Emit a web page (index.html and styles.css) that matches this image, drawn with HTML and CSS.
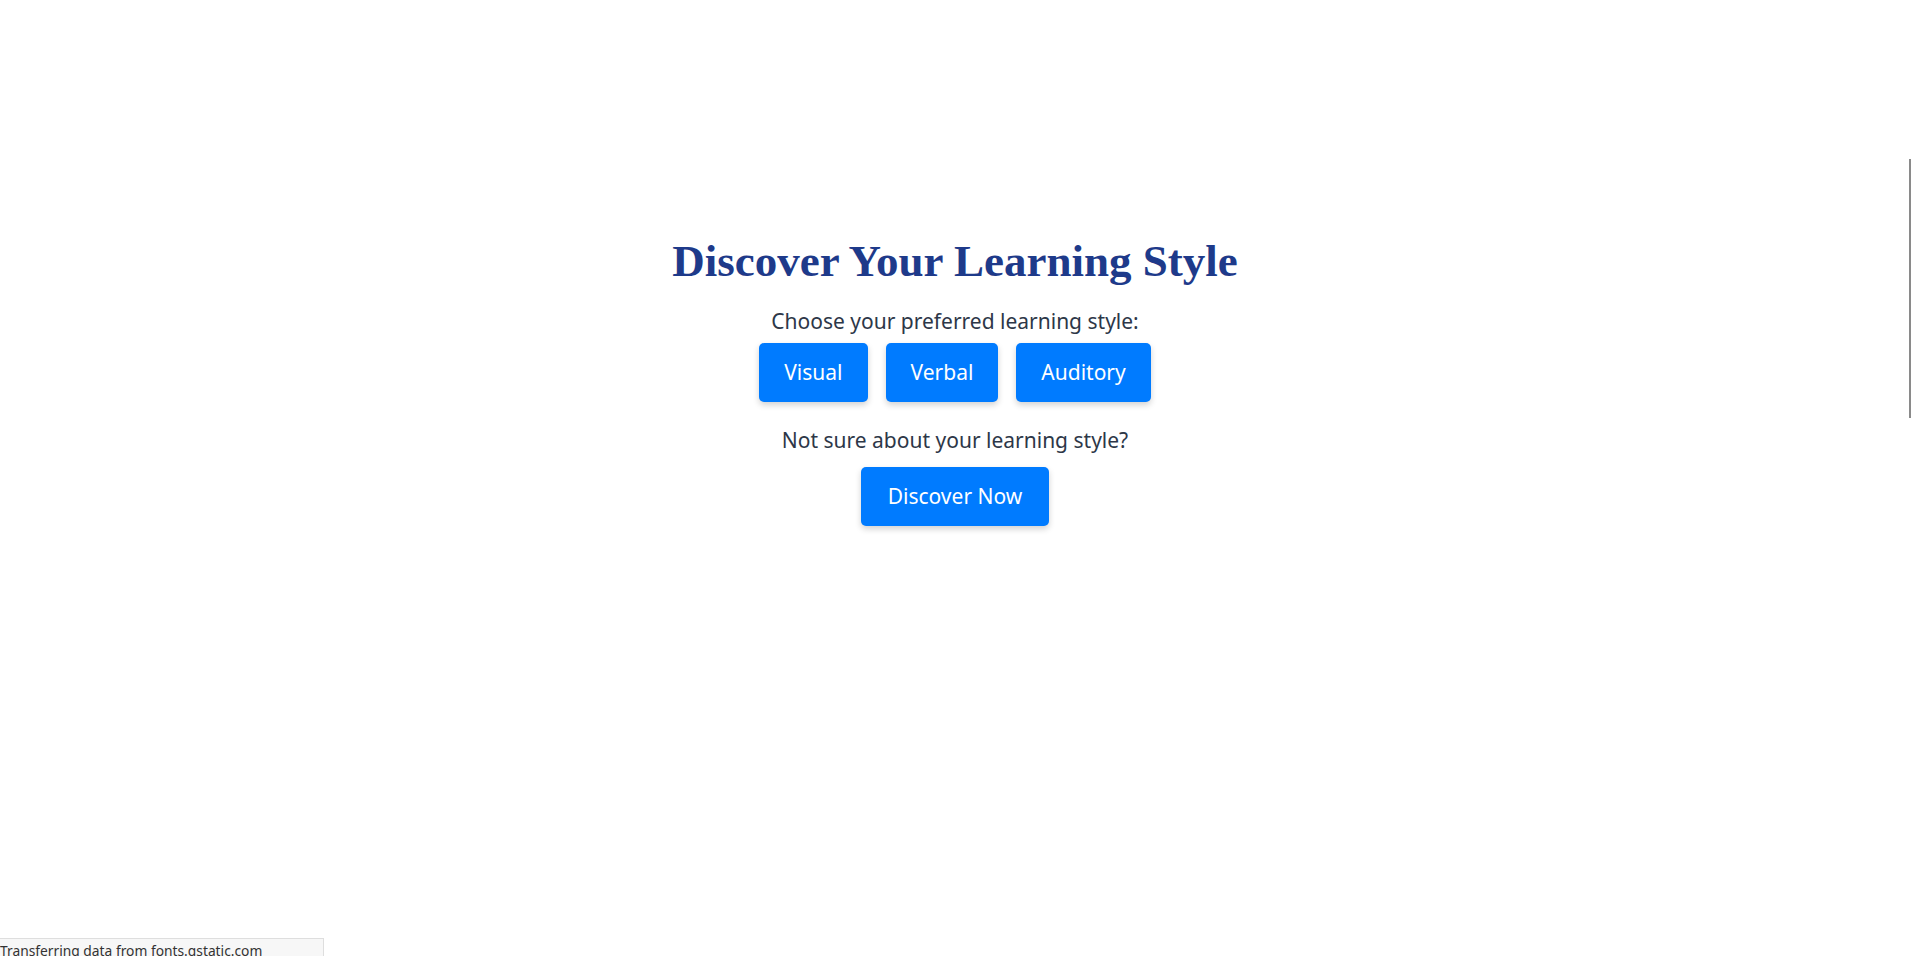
FILE: index.html
```html
<!DOCTYPE html>
<html lang="en">
<head>
<meta charset="utf-8">
<title>Discover Your Learning Style</title>
<link rel="stylesheet" href="styles.css">
</head>
<body>
<main class="page">
  <h1 class="title">Discover Your Learning Style</h1>
  <p class="lead">Choose your preferred learning style:</p>
  <div class="choices">
    <button class="btn">Visual</button>
    <button class="btn">Verbal</button>
    <button class="btn">Auditory</button>
  </div>
  <p class="lead second">Not sure about your learning style?</p>
  <button class="btn discover">Discover Now</button>
</main>
<div class="status">Transferring data from fonts.gstatic.com</div>
<div class="scroll-thumb"></div>
</body>
</html>
```
FILE: styles.css
```css
html, body {
  margin: 0;
  padding: 0;
  background: #ffffff;
}
body {
  font-family: "Noto Sans", "Open Sans", sans-serif;
  color: #2d3748;
  height: 956px;
  overflow: hidden;
}
.page {
  display: flex;
  flex-direction: column;
  align-items: center;
  padding-top: 234px;
  padding-right: 4px;
}
.title {
  font-family: "Liberation Serif", "Times New Roman", serif;
  font-weight: bold;
  font-size: 45px;
  line-height: 54px;
  color: #1e3a8a;
  margin: 0;
}
.lead {
  font-size: 21px;
  line-height: 27px;
  margin: 20px 0 8px;
}
.lead.second {
  margin: 25px 0 13px;
}
.choices {
  display: flex;
  gap: 18px;
}
.btn {
  font-family: "Noto Sans", "Open Sans", sans-serif;
  font-size: 21px;
  line-height: 27px;
  color: #ffffff;
  background: #007bff;
  border: none;
  border-radius: 5px;
  padding: 16px 25px;
  box-shadow: 0 3px 6px rgba(0, 0, 0, 0.18);
  cursor: pointer;
}
.discover {
  padding: 16px 27px;
}
.status {
  position: fixed;
  left: 0;
  bottom: 0;
  width: 324px;
  height: 18px;
  box-sizing: border-box;
  background: #f7f7f7;
  border-top: 1px solid #dedede;
  border-right: 1px solid #dedede;
  font-family: "Noto Sans", sans-serif;
  font-size: 13.8px;
  line-height: 24px;
  color: #333333;
  white-space: nowrap;
  overflow: hidden;
}
.scroll-thumb {
  position: fixed;
  right: 3px;
  top: 159px;
  width: 2px;
  height: 259px;
  background: #8a8a8a;
}
```
